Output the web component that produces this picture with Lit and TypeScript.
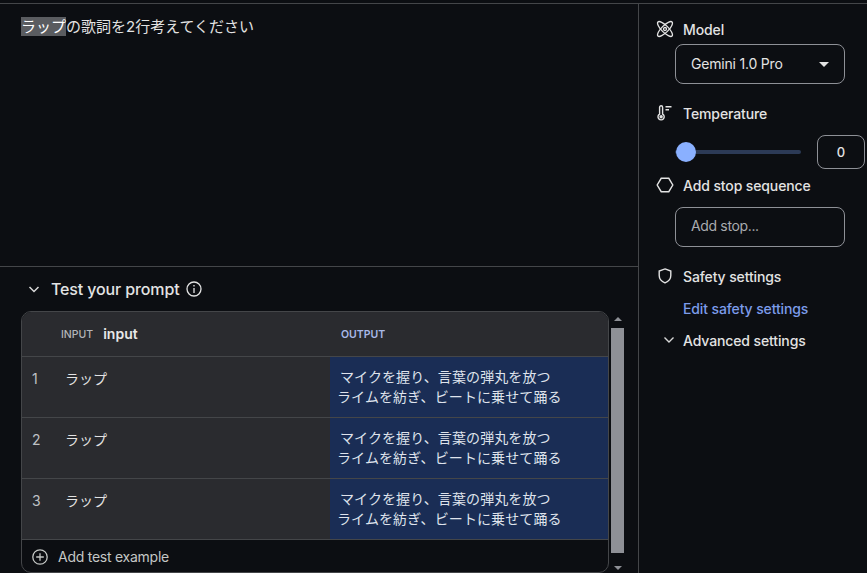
import { LitElement, html, css } from "lit";
import { customElement } from "lit/decorators.js";

const rows = [1, 2, 3];

@customElement("app-root")
export class AppRoot extends LitElement {
  static styles = css`
    :host { display: block; width: 867px; height: 573px; overflow: hidden; background: #0c0e12; color: #e3e3e3;
      font-family: Inter, "Noto Sans CJK JP", sans-serif; font-size: 14px; }
    .page { display: grid; grid-template-columns: 638px 1fr; grid-template-rows: 1px 1fr; height: 573px; box-sizing: border-box; padding-top: 3px; }
    .topline { grid-column: 1 / 3; height: 1px; background: #444649; }
    .left { display: flex; flex-direction: column; min-height: 0; }
    .prompt { height: 263px; box-sizing: border-box; padding: 13px 0 0 21px; border-bottom: 1px solid #444649; line-height: 20px; font-size: 15px; color: #e3e3e3; flex: none; }
    .sel { background: #5a5c60; color: #fff; }
    .test { flex: 1; display: flex; flex-direction: column; min-height: 0; }
    .test-head { height: 44px; flex: none; display: flex; align-items: center; padding-left: 27px; gap: 10px; font-size: 16px; font-weight: 500; letter-spacing: -0.13px; color: #e3e3e3; box-sizing: border-box; }
    .test-head span { margin-bottom: 1px; }
    .test-head svg.info { margin-left: -3px; }
    .test-body { flex: 1; display: flex; min-height: 0; padding-left: 21px; }
    .table { width: 588px; box-sizing: border-box; height: 262px; flex: none; border: 1px solid #444649; border-radius: 10px; overflow: hidden; }
    .thead { height: 44px; display: grid; grid-template-columns: 308px 1fr; background: #2a2b2f; border-bottom: 1px solid #444649; }
    .th-in { display: flex; align-items: center; padding-left: 39px; gap: 10px; font-size: 10.5px; color: #b4b6ba; font-weight: 500; }
    .th-in b { font-size: 14px; font-weight: 600; color: #e8e8e8; margin-bottom: 2px; }
    .th-out { display: flex; align-items: center; padding-left: 11px; font-size: 10.5px; font-weight: 600; color: #a8b9e8; }
    .row { height: 60px; display: grid; grid-template-columns: 308px 1fr; border-bottom: 1px solid #444649; background: #2a2b2f; }
    .cell-in { display: flex; padding: 12px 0 0 10px; line-height: 20px; }
    .num { width: 33px; color: #bfc1c5; flex: none; }
    .cell-out { background: #1a2d55; color: #dfe3ec; line-height: 20px; padding-top: 10px; box-sizing: border-box; letter-spacing: 0.1px; }
    .cell-out div:first-child { padding-left: 10px; }
    .cell-out div:last-child { padding-left: 7px; }
    .foot { display: flex; align-items: center; height: 34px; padding-left: 10px; gap: 10px; color: #c4c7c5; letter-spacing: -0.25px; }
    .foot span { margin-bottom: 2px; }
    .scroll { width: 13px; margin-left: 2px; display: flex; flex-direction: column; align-items: center; flex: none; }
    .arrow-up { margin-top: 6px; width: 0; height: 0; border: 4px solid transparent; border-top: 0; border-bottom: 4px solid #8e9096; }
    .thumb { margin-top: 7px; width: 13px; height: 225px; background: #8e9096; flex: none; }
    .arrow-down { margin-top: 13px; width: 0; height: 0; border: 4px solid transparent; border-bottom: 0; border-top: 4px solid #8e9096; }
    .right { border-left: 1px solid #444649; padding-left: 18px; display: flex; flex-direction: column; }
    .label { display: flex; align-items: center; gap: 10px; height: 20px; font-weight: 500; letter-spacing: -0.12px; color: #e3e3e3; }
    .label svg { width: 16px; height: 16px; flex: none; overflow: visible; }
    .box { margin-left: 18px; width: 170px; height: 40px; box-sizing: border-box; border: 1px solid #8e9096; border-radius: 8px; display: flex; align-items: center; padding: 0 15px; justify-content: space-between; letter-spacing: -0.2px; }
    .box .gem { margin-bottom: 2px; }
    .box .ph { color: #a9abaf; letter-spacing: -0.35px; margin-bottom: 3px; }
    .caret { width: 0; height: 0; border: 5px solid transparent; border-bottom: 0; border-top: 5px solid #e3e3e3; }
    .l-model { margin-top: 15px; }
    .b-model { margin-top: 5px; }
    .l-temp { margin-top: 19px; }
    .sl-row { display: flex; align-items: center; height: 34px; margin-top: 12px; margin-left: 18px; }
    .track { width: 126px; height: 4px; background: #2c3a56; border-radius: 2px; position: relative; margin-right: 16px; }
    .knob { position: absolute; left: 1px; top: -8px; width: 20px; height: 20px; border-radius: 50%; background: #8ab0ff; }
    .val { width: 48px; height: 34px; box-sizing: border-box; border: 1px solid #8e9096; border-radius: 8px; display: flex; align-items: center; justify-content: center; font-size: 13px; font-weight: 500; }
    .l-stop { margin-top: 6px; }
    .b-stop { margin-top: 12px; }
    .l-safe { margin-top: 19px; }
    .link { color: #7c9cea; font-weight: 500; letter-spacing: -0.12px; margin-left: 26px; height: 20px; line-height: 20px; margin-top: 13px; }
    .adv { gap: 8px; padding-left: 6px; margin-top: 11px; }
    .label.adv svg { width: 12px; height: 12px; }
  `;

  render() {
    return html`<div class="page">
      <div class="topline"></div>
      <div class="left">
        <div class="prompt"><span class="sel">ラップ</span>の歌詞を2行考えてください</div>
        <div class="test">
          <div class="test-head">
            <svg width="14" height="14" viewBox="0 0 14 14" fill="none" stroke="#d8d8d8" stroke-width="1.5"><path d="M2.500 5l4.500 4.500L11.500 5"/></svg>
            <span>Test your prompt</span>
            <svg class="info" width="16" height="16" viewBox="0 0 16 16" fill="none" stroke="#e3e3e3" stroke-width="1.3"><circle cx="8" cy="8" r="7"/><path d="M8 7v5M8 4v1.6"/></svg>
          </div>
          <div class="test-body">
            <div class="table">
              <div class="thead">
                <div class="th-in"><span>INPUT</span><b>input</b></div>
                <div class="th-out">OUTPUT</div>
              </div>
              ${rows.map(
                (n) => html`<div class="row">
                  <div class="cell-in"><span class="num">${n}</span><span>ラップ</span></div>
                  <div class="cell-out"><div>マイクを握り、言葉の弾丸を放つ</div><div>ライムを紡ぎ、ビートに乗せて踊る</div></div>
                </div>`
              )}
              <div class="foot">
                <svg width="16" height="16" viewBox="0 0 16 16" fill="none" stroke="#c4c7c5" stroke-width="1.3"><circle cx="8" cy="8" r="7.2"/><path d="M8 4.200v7.600M4.200 8h7.600"/></svg>
                <span>Add test example</span>
              </div>
            </div>
            <div class="scroll"><div class="arrow-up"></div><div class="thumb"></div><div class="arrow-down"></div></div>
          </div>
        </div>
      </div>
      <div class="right">
        <div class="label l-model">
          <svg viewBox="0 0 16 16" fill="none" stroke="#e3e3e3" stroke-width="1.3"><ellipse cx="8" cy="8" rx="10" ry="3.400" transform="rotate(45 8 8)"/><ellipse cx="8" cy="8" rx="10" ry="3.400" transform="rotate(-45 8 8)"/><circle cx="8" cy="8" r="1.500"/></svg>
          <span>Model</span>
        </div>
        <div class="box b-model"><span class="gem">Gemini 1.0 Pro</span><span class="caret"></span></div>
        <div class="label l-temp">
          <svg viewBox="0 0 16 16" fill="none" stroke="#e3e3e3" stroke-width="1.4"><path d="M2.600 2.200a1.500 1.500 0 0 1 3 0v6.900a3.100 3.100 0 1 1-3 0z"/><circle cx="4.100" cy="11.800" r="1.700" fill="#e3e3e3" stroke="none"/><path d="M8.500 1.800h6M8.500 4.800h3.500"/></svg>
          <span>Temperature</span>
        </div>
        <div class="sl-row"><div class="track"><div class="knob"></div></div><div class="val">0</div></div>
        <div class="label l-stop">
          <svg viewBox="0 0 16 16" fill="none" stroke="#e3e3e3" stroke-width="1.4"><path d="M4.200 1.300h7.600L15.800 8l-4 6.700H4.200L.2 8z"/></svg>
          <span>Add stop sequence</span>
        </div>
        <div class="box b-stop"><span class="ph">Add stop...</span></div>
        <div class="label l-safe">
          <svg viewBox="0 0 16 16" fill="none" stroke="#e3e3e3" stroke-width="1.4"><path d="M8 .9l5.800 2.200v4.400c0 3.400-2.400 6-5.800 7.400-3.400-1.400-5.800-4-5.800-7.400V3.100z"/></svg>
          <span>Safety settings</span>
        </div>
        <div class="link">Edit safety settings</div>
        <div class="label adv">
          <svg viewBox="0 0 12 12" fill="none" stroke="#d8d8d8" stroke-width="1.4"><path d="M1.500 3.500L6 8l4.500-4.500"/></svg>
          <span>Advanced settings</span>
        </div>
      </div>
    </div>`;
  }
}
